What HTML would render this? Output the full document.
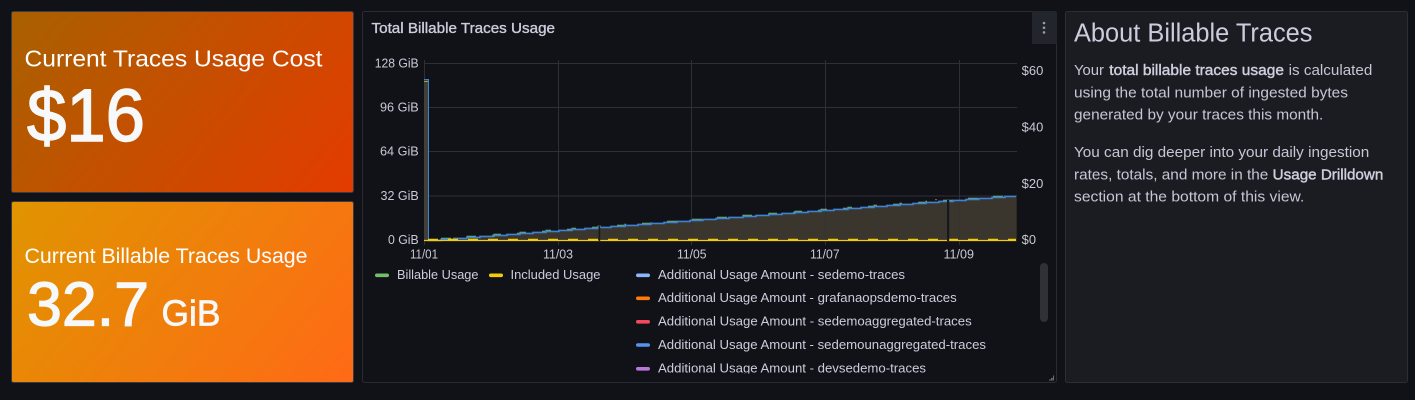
<!DOCTYPE html>
<html lang="en">
<head>
<meta charset="utf-8">
<title>Billable Traces</title>
<style>
html,body{margin:0;padding:0;width:1415px;height:400px;overflow:hidden;background:#111217}
svg{display:block}
text{font-family:"Liberation Sans",Arial,sans-serif;fill:#ccccdc}
.ax{font-size:12.5px;fill:#c8c8d6}
.lg{font-size:12.5px;fill:#ccccdc}
.bd{font-size:14.5px;fill:#c6c6d4}
.st{fill:#fff}
.b{fill:#cfcfdd;stroke:#cfcfdd;stroke-width:.4px}
</style>
</head>
<body>
<svg width="1415" height="400" viewBox="0 0 1415 400" xmlns="http://www.w3.org/2000/svg">
<defs>
<linearGradient id="g1" gradientUnits="userSpaceOnUse" x1="40" y1="-15" x2="325" y2="218">
<stop offset="0" stop-color="#a96000"/><stop offset="1" stop-color="#e33c00"/>
</linearGradient>
<linearGradient id="g2" gradientUnits="userSpaceOnUse" x1="40" y1="175" x2="325" y2="408">
<stop offset="0" stop-color="#e09400"/><stop offset="1" stop-color="#ff6a16"/>
</linearGradient>
<clipPath id="lc"><rect x="362" y="262" width="690" height="111.5"/></clipPath>
</defs>
<rect width="1415" height="400" fill="#111217"/>

<!-- Stat 1 -->
<rect x="11.5" y="11.5" width="342" height="181" rx="2" fill="url(#g1)" stroke="#3a3b42"/>
<text class="st" x="24.5" y="66.7" font-size="23.5" textLength="298" lengthAdjust="spacingAndGlyphs">Current Traces Usage Cost</text>
<text class="st" x="27" y="141" font-size="74" textLength="118" lengthAdjust="spacingAndGlyphs" style="fill:#f7f8fa;stroke:#f7f8fa;stroke-width:1.5px">$16</text>

<!-- Stat 2 -->
<rect x="11.5" y="201.5" width="342" height="181" rx="2" fill="url(#g2)" stroke="#3a3b42"/>
<text class="st" x="24.5" y="263" font-size="21.5" textLength="283" lengthAdjust="spacingAndGlyphs">Current Billable Traces Usage</text>
<text class="st" x="27" y="325.7" font-size="62" textLength="122" lengthAdjust="spacingAndGlyphs" style="fill:#f7f8fa;stroke:#f7f8fa;stroke-width:1.2px">32.7</text>
<text class="st" x="161.5" y="325.7" font-size="36" textLength="59" lengthAdjust="spacingAndGlyphs" style="fill:#f7f8fa;stroke:#f7f8fa;stroke-width:.7px">GiB</text>

<!-- Chart panel -->
<rect x="362.5" y="11.5" width="694" height="371" rx="2" fill="#111217" stroke="#2a2b31"/>
<text x="371.5" y="33" font-size="14.5" textLength="183.5" lengthAdjust="spacingAndGlyphs" stroke="#ccccdc" stroke-width=".35">Total Billable Traces Usage</text>
<path d="M1032 11H1055a2 2 0 0 1 2 2V44H1032Z" fill="#22252b"/>
<circle cx="1044" cy="23" r="1.3" fill="#9a9ba5"/><circle cx="1044" cy="27.8" r="1.3" fill="#9a9ba5"/><circle cx="1044" cy="32.4" r="1.3" fill="#9a9ba5"/>

<!-- grid -->
<g stroke="#2e2f35" stroke-width="1" fill="none">
<path d="M424 63.5H1017M424 107.5H1017M424 151.5H1017M424 196H1017M424 240H1017"/>
<path d="M424.5 60V245M558.5 60V245M691.5 60V245M825.5 60V245M959.5 60V245"/>
</g>

<!-- left spike -->
<rect x="424" y="79" width="4.5" height="161" fill="#3f403c"/>
<path d="M424 79.5H428.5V240" fill="none" stroke="#3f82c9" stroke-width="1"/>
<path d="M424 81.5H428" stroke="#7fae62" stroke-width="1"/>

<!-- area -->
<path d="M428 240H441V239H454V238H467V237H480V236H494V235H507V234H520V233H533V232H546V231H559V230H572V229H585V228H598V227H611V226H625V225H638V224H651V223H664V222H677V221H690V220H703V219H716V218H729V217H743V216H756V215H769V214H782V213H795V212H808V211H821V210H834V209H848V208H861V207H874V206H887V205H900V204H913V203H926V202H939V201H953V200H966V199H979V198H992V197H1005V196H1017V240Z" fill="#3a362e"/>
<g opacity=".55" stroke="#303137" fill="none"><path d="M691.5 220V240M825.5 210V240M959.5 200V240M558.5 230V240"/></g>

<!-- green -->
<path d="M441 238H454V237H467V236H480V235H494V234H507V233H520V232H533V231H546V230H559V229H572V228H585V227H598V226H611V225H625V224H638V223H651V222H664V221H677V220H690V219H703V218H716V217H729V216H743V215H756V214H769V213H782V212H795V211H808V210H821V209H834V208H848V207H861V206H874V205H887V204H900V203H913V202H926V201H939V200H953V199H966V198H979V197H992V196H1005" fill="none" stroke="#73bf69" stroke-width="1" stroke-dasharray="10 17" transform="translate(0,.3)"/>
<!-- blue -->
<path d="M428 240H441V239H454V238H467V237H480V236H494V235H507V234H520V233H533V232H546V231H559V230H572V229H585V228H598V227H611V226H625V225H638V224H651V223H664V222H677V221H690V220H703V219H716V218H729V217H743V216H756V215H769V214H782V213H795V212H808V211H821V210H834V209H848V208H861V207H874V206H887V205H900V204H913V203H926V202H939V201H953V200H966V199H979V198H992V197H1005V196H1017" fill="none" stroke="#3f82d4" stroke-width="1.6" transform="translate(0,.4)"/>
<path d="M935 199.7h2" stroke="#c8661c" stroke-width="1"/>

<!-- yellow -->
<path d="M424 240.5H1017" stroke="#f2cc0c" stroke-width="1.2"/>
<path d="M428 239.4H1017" stroke="#f2cc0c" stroke-width="1.2" stroke-dasharray="10 10"/>

<!-- gaps -->
<rect x="598.6" y="226" width="1.6" height="15" fill="#17181b"/>
<rect x="947" y="200" width="2.2" height="41" fill="#17181b"/>
<rect x="1016" y="196" width="1" height="45" fill="#2b2a26"/>

<!-- axis labels -->
<g>
<text class="ax" x="374.7" y="67.5" textLength="44" lengthAdjust="spacingAndGlyphs">128 GiB</text>
<text class="ax" x="380" y="111.5" textLength="38.7" lengthAdjust="spacingAndGlyphs">96 GiB</text>
<text class="ax" x="380" y="155.5" textLength="38.7" lengthAdjust="spacingAndGlyphs">64 GiB</text>
<text class="ax" x="380.5" y="200.2" textLength="38.2" lengthAdjust="spacingAndGlyphs">32 GiB</text>
<text class="ax" x="388" y="244.2" textLength="30.7" lengthAdjust="spacingAndGlyphs">0 GiB</text>
<text class="ax" x="410" y="258.5" textLength="28" lengthAdjust="spacingAndGlyphs">11/01</text>
<text class="ax" x="543" y="258.5" textLength="30" lengthAdjust="spacingAndGlyphs">11/03</text>
<text class="ax" x="677" y="258.5" textLength="29.5" lengthAdjust="spacingAndGlyphs">11/05</text>
<text class="ax" x="810" y="258.5" textLength="29.6" lengthAdjust="spacingAndGlyphs">11/07</text>
<text class="ax" x="943.5" y="258.5" textLength="30.5" lengthAdjust="spacingAndGlyphs">11/09</text>
<text class="ax" x="1021.7" y="75" textLength="21.6" lengthAdjust="spacingAndGlyphs">$60</text>
<text class="ax" x="1021.7" y="131.5" textLength="21.6" lengthAdjust="spacingAndGlyphs">$40</text>
<text class="ax" x="1021.7" y="188" textLength="21.6" lengthAdjust="spacingAndGlyphs">$20</text>
<text class="ax" x="1021.7" y="244" textLength="14.3" lengthAdjust="spacingAndGlyphs">$0</text>
</g>

<!-- legend -->
<rect x="375" y="273.5" width="14" height="3.6" rx="1.8" fill="#73bf69"/>
<text class="lg" x="397" y="279" textLength="81.5" lengthAdjust="spacingAndGlyphs">Billable Usage</text>
<rect x="489" y="273.5" width="14" height="3.6" rx="1.8" fill="#f2cc0c"/>
<text class="lg" x="510.5" y="279" textLength="90" lengthAdjust="spacingAndGlyphs">Included Usage</text>
<g clip-path="url(#lc)">
<rect x="636" y="273.5" width="14" height="3.6" rx="1.8" fill="#8ab8ff"/>
<text class="lg" x="658" y="279" textLength="247" lengthAdjust="spacingAndGlyphs">Additional Usage Amount - sedemo-traces</text>
<rect x="636" y="296.5" width="14" height="3.6" rx="1.8" fill="#ff780a"/>
<text class="lg" x="658" y="302" textLength="298.7" lengthAdjust="spacingAndGlyphs">Additional Usage Amount - grafanaopsdemo-traces</text>
<rect x="636" y="320" width="14" height="3.6" rx="1.8" fill="#f2495c"/>
<text class="lg" x="658" y="325.7" textLength="313.7" lengthAdjust="spacingAndGlyphs">Additional Usage Amount - sedemoaggregated-traces</text>
<rect x="636" y="343.2" width="14" height="3.6" rx="1.8" fill="#5794f2"/>
<text class="lg" x="658" y="349" textLength="328" lengthAdjust="spacingAndGlyphs">Additional Usage Amount - sedemounaggregated-traces</text>
<rect x="636" y="367" width="14" height="3.6" rx="1.8" fill="#b877d9"/>
<text class="lg" x="658" y="372.7" textLength="268" lengthAdjust="spacingAndGlyphs">Additional Usage Amount - devsedemo-traces</text>
</g>
<rect x="1040" y="263" width="8" height="59" rx="4" fill="#303136"/>
<path d="M1053.5 375.5V380H1049M1053.5 378.5H1051.5V380" fill="none" stroke="#6a6b72" stroke-width="1"/>

<!-- About panel -->
<rect x="1065.5" y="11.5" width="342" height="371" rx="2" fill="#1a1c22" stroke="#2d2e34"/>
<text x="1074" y="41.7" font-size="25.5" textLength="238.5" lengthAdjust="spacingAndGlyphs" fill="#ccccdc">About Billable Traces</text>
<text class="bd" x="1074" y="75" textLength="30" lengthAdjust="spacingAndGlyphs">Your</text>
<text class="bd b" x="1109.3" y="75" textLength="174.7" lengthAdjust="spacingAndGlyphs">total billable traces usage</text>
<text class="bd" x="1288.7" y="75" textLength="83.6" lengthAdjust="spacingAndGlyphs">is calculated</text>
<text class="bd" x="1074" y="97.3" textLength="274" lengthAdjust="spacingAndGlyphs">using the total number of ingested bytes</text>
<text class="bd" x="1074" y="119.3" textLength="249.3" lengthAdjust="spacingAndGlyphs">generated by your traces this month.</text>
<text class="bd" x="1074" y="157" textLength="295.3" lengthAdjust="spacingAndGlyphs">You can dig deeper into your daily ingestion</text>
<text class="bd" x="1074" y="179.3" textLength="194.3" lengthAdjust="spacingAndGlyphs">rates, totals, and more in the</text>
<text class="bd b" x="1272.7" y="179.3" textLength="110.6" lengthAdjust="spacingAndGlyphs">Usage Drilldown</text>
<text class="bd" x="1074" y="201.3" textLength="230.3" lengthAdjust="spacingAndGlyphs">section at the bottom of this view.</text>
</svg>
</body>
</html>
